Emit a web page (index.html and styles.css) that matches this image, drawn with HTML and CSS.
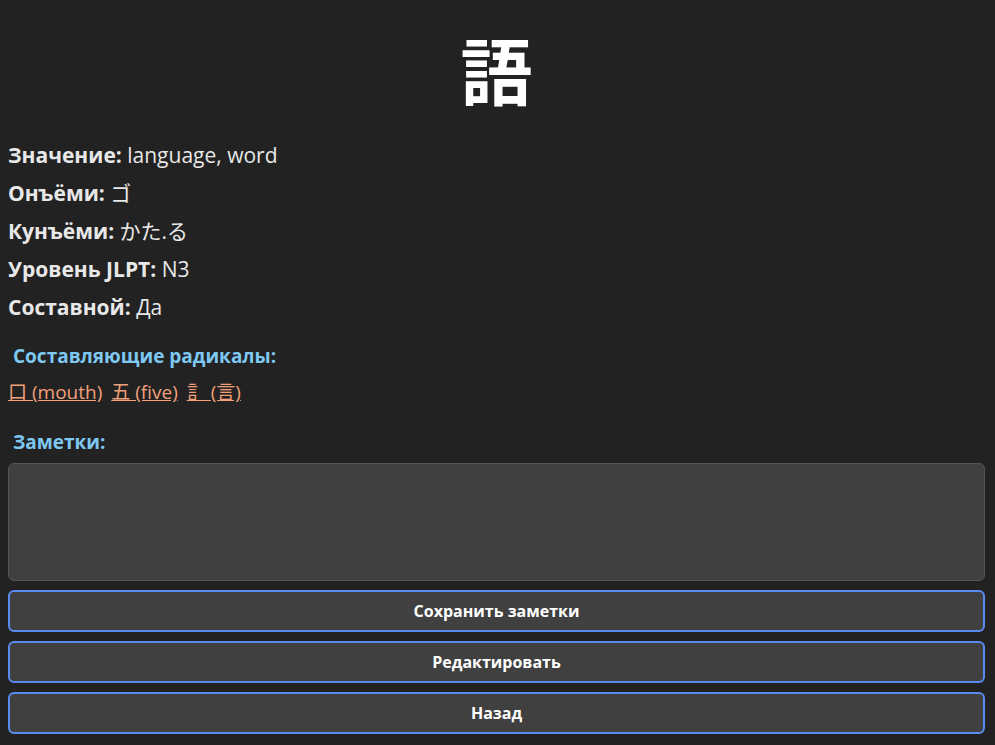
FILE: index.html
```html
<!DOCTYPE html>
<html lang="ru">
<head>
<meta charset="utf-8">
<title>語</title>
<link rel="stylesheet" href="styles.css">
</head>
<body>
<div class="page">
  <h1 class="kanji">語</h1>
  <div class="info">
    <p class="row"><b>Значение:</b> language, word</p>
    <p class="row"><b>Онъёми:</b> ゴ</p>
    <p class="row"><b>Кунъёми:</b> かた.る</p>
    <p class="row"><b>Уровень JLPT:</b> N3</p>
    <p class="row"><b>Составной:</b> Да</p>
  </div>
  <h3 class="section">Составляющие радикалы:</h3>
  <div class="radicals">
    <a href="#" class="rad">口 (mouth)</a>
    <a href="#" class="rad">五 (five)</a>
    <a href="#" class="rad">訁 (言)</a>
  </div>
  <h3 class="section notes-title">Заметки:</h3>
  <textarea class="notes"></textarea>
  <div class="buttons">
    <button class="btn">Сохранить заметки</button>
    <button class="btn">Редактировать</button>
    <button class="btn">Назад</button>
  </div>
</div>
</body>
</html>
```
FILE: styles.css
```css
html, body {
  background: #222222;
}
body {
  margin: 0;
  padding: 0 10px 0 8px;
  color: #e8e8e8;
  font-family: "Open Sans", "Noto Sans", "Noto Sans CJK JP", sans-serif;
}
.page {
  display: flex;
  flex-direction: column;
}
.kanji {
  margin: 23px 0 0;
  text-align: center;
  font-family: "Noto Sans CJK JP", sans-serif;
  font-size: 72px;
  font-weight: 700;
  line-height: 90px;
  color: #ffffff;
}
.info {
  margin-top: 28px;
  display: flex;
  flex-direction: column;
  gap: 9px;
}
.row {
  margin: 0;
  font-size: 21px;
  line-height: 29px;
}
.row b {
  font-weight: 700;
}
.section {
  margin: 22px 0 0 5px;
  font-size: 19px;
  font-weight: 700;
  line-height: 25px;
  color: #7ec8f2;
}
.radicals {
  margin-top: 11px;
  display: flex;
  gap: 9px;
  font-size: 19px;
  line-height: 25px;
}
.rad {
  color: #f2a07b;
  text-decoration: underline;
}
.notes-title {
  margin-top: 25px;
}
.notes {
  margin: 8px 0 0;
  height: 118px;
  box-sizing: border-box;
  background: #404040;
  border: 1px solid #555555;
  border-radius: 6px;
  resize: none;
  color: #fff;
}
.buttons {
  margin-top: 9px;
  display: flex;
  flex-direction: column;
  gap: 9px;
}
.btn {
  height: 42px;
  background: #404040;
  border: 2px solid #5b8af0;
  border-radius: 6px;
  color: #ffffff;
  font-family: "Open Sans", "Noto Sans", sans-serif;
  font-size: 16px;
  font-weight: 700;
}
```
